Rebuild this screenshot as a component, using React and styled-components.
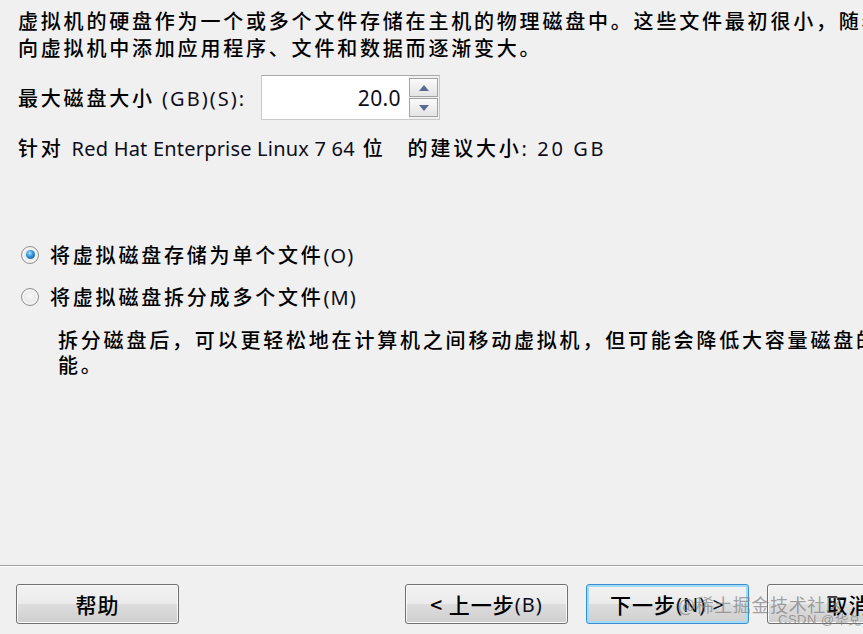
import React from 'react';
import styled, { createGlobalStyle } from 'styled-components';

const Global = createGlobalStyle`
  html, body { margin: 0; padding: 0; background: #f0f0f0; }
  body { width: 863px; height: 634px; overflow: hidden; }
`;

const Dialog = styled.div`
  position: relative;
  width: 863px;
  height: 634px;
  overflow: hidden;
  background: #f0f0f0;
  display: flex;
  flex-direction: column;
  font-family: "Noto Sans CJK SC", "Noto Sans", sans-serif;
  font-size: 20px;
  font-weight: 500;
  letter-spacing: 2.8px;
  color: #000;
`;

const Body = styled.div`
  flex: 1;
  display: flex;
  flex-direction: column;
  padding: 7px 0 0 18px;
`;

const Line = styled.div`
  white-space: nowrap;
  height: ${p => p.$h || 27}px;
  line-height: ${p => p.$h || 27}px;
`;

const Lat = styled.span`
  font-family: "Noto Sans", "DejaVu Sans", sans-serif;
  font-size: 20px;
  font-weight: 400;
  letter-spacing: ${p => p.$ls || 0.2}px;
  color: #0d0d1a;
`;

const Sp = styled.span`
  display: inline-block;
  width: ${p => p.$w}px;
`;

const SizeRow = styled.div`
  margin-top: 14px;
  display: flex;
  align-items: center;
  height: 45px;
`;

const Label = styled.div`
  width: 243px;
  white-space: nowrap;
`;

const Spin = styled.div`
  width: 179px;
  height: 45px;
  box-sizing: border-box;
  display: flex;
  border: 1px solid #c9c9c9;
  border-top-color: #a9a9a9;
  background: #fff;
`;

const Field = styled.div`
  flex: 1;
  display: flex;
  align-items: center;
  justify-content: flex-end;
  padding-right: 8px;
  font-family: "Noto Sans", "DejaVu Sans", sans-serif;
  font-size: 21px;
  font-weight: 400;
  letter-spacing: 0.4px;
  color: #0d0d1a;
`;

const Spinner = styled.div`
  width: 29px;
  display: flex;
  flex-direction: column;
  padding: 2px 1px 2px 0;
  gap: 1px;
  background: #f0f0f0;
`;

const SpinBtn = styled.div`
  flex: 1;
  border: 1px solid #a3a3a3;
  background: linear-gradient(#fbfbfb, #e4e4e4);
  display: flex;
  align-items: center;
  justify-content: center;
`;

const Arrow = ({ down }) => (
  <svg width="10" height="6" viewBox="0 0 10 6">
    <polygon points={down ? '0,0 10,0 5,6' : '0,6 10,6 5,0'} fill="#5a6b96" />
  </svg>
);

const Rec = styled(Line)`
  margin-top: 14px;
`;

const RadioGroup = styled.div`
  margin-top: 80px;
  display: flex;
  flex-direction: column;
  gap: 15px;
`;

const RadioRow = styled.div`
  display: flex;
  align-items: center;
  height: 27px;
  padding-left: 3px;
  gap: 11px;
  white-space: nowrap;
`;

const RadioDot = styled.span`
  width: 18px;
  height: 18px;
  box-sizing: border-box;
  border-radius: 50%;
  border: 1px solid #8f9090;
  background: radial-gradient(circle at 50% 45%, #f8f8f8 0%, #e6e6e6 60%, #d2d2d2 100%);
  display: flex;
  align-items: center;
  justify-content: center;
  box-shadow: inset 0 0 0 2px #f4f4f4;
  &::after {
    content: "";
    display: ${p => (p.$on ? 'block' : 'none')};
    width: 9px;
    height: 9px;
    border-radius: 50%;
    background: radial-gradient(circle at 40% 35%, #a6e4ff 0%, #2f8fd8 45%, #0b4a8c 100%);
  }
`;

const Desc = styled.div`
  margin-top: 17px;
  padding-left: 40px;
`;

const Separator = styled.div`
  height: 0;
  border-top: 1px solid #a0a0a0;
  border-bottom: 1px solid #ffffff;
`;

const Footer = styled.div`
  display: flex;
  padding: 17px 0 10px 16px;
`;

const Group = styled.div`
  display: flex;
  gap: 18px;
  margin-left: 226px;
`;

const Button = styled.div`
  flex: none;
  width: 163px;
  height: 40px;
  box-sizing: border-box;
  border: 1px solid ${p => (p.$focus ? '#3c8ccf' : '#707070')};
  border-radius: 3px;
  background: linear-gradient(#f2f2f2 0%, #ebebeb 50%, #dddddd 50%, #cfcfcf 100%);
  box-shadow: inset 0 0 0 ${p => (p.$focus ? '2px #9fdcf8' : '1px #fbfbfb')};
  display: flex;
  align-items: center;
  justify-content: center;
  white-space: nowrap;
  font-size: 21px;
  letter-spacing: 1px;
`;

const Watermark = styled.div`
  position: absolute;
  left: 678px;
  top: 591px;
  display: flex;
  flex-direction: column;
  align-items: flex-start;
  white-space: nowrap;
  color: rgba(125, 125, 125, 0.7);
  font-weight: 400;
  pointer-events: none;
`;

const WmMain = styled.div`
  font-size: 18px;
  letter-spacing: 0.6px;
  line-height: 26px;
`;

const WmSub = styled.div`
  font-family: "Liberation Sans", sans-serif;
  font-size: 13px;
  letter-spacing: 0.5px;
  line-height: 14px;
  margin-left: 100px;
  margin-top: -4px;
`;

export default function App() {
  return (
    <Dialog>
      <Global />
      <Body>
        <Line>虚拟机的硬盘作为一个或多个文件存储在主机的物理磁盘中。这些文件最初很小，随着您</Line>
        <Line>向虚拟机中添加应用程序、文件和数据而逐渐变大。</Line>
        <SizeRow>
          <Label>
            最大磁盘大小 <Lat $ls={2}>(GB)(S):</Lat>
          </Label>
          <Spin>
            <Field>20.0</Field>
            <Spinner>
              <SpinBtn><Arrow /></SpinBtn>
              <SpinBtn><Arrow down /></SpinBtn>
            </Spinner>
          </Spin>
        </SizeRow>
        <Rec>
          针对<Sp $w={8} /><Lat>Red Hat Enterprise Linux 7 64</Lat><Sp $w={8} />位<Sp $w={22} />的建议大小<Lat $ls={2.6}>: 20 GB</Lat>
        </Rec>
        <RadioGroup>
          <RadioRow>
            <RadioDot $on />
            <span>将虚拟磁盘存储为单个文件<Lat $ls={1}>(O)</Lat></span>
          </RadioRow>
          <RadioRow>
            <RadioDot />
            <span>将虚拟磁盘拆分成多个文件<Lat $ls={1}>(M)</Lat></span>
          </RadioRow>
        </RadioGroup>
        <Desc>
          <Line $h={25}>拆分磁盘后，可以更轻松地在计算机之间移动虚拟机，但可能会降低大容量磁盘的性</Line>
          <Line $h={25}>能。</Line>
        </Desc>
      </Body>
      <Separator />
      <Footer>
        <Button>帮助</Button>
        <Group>
          <Button>&lt; 上一步<Lat $ls={1}>(B)</Lat></Button>
          <Button $focus>下一步<Lat $ls={1}>(N) &gt;</Lat></Button>
          <Button>取消</Button>
        </Group>
      </Footer>
      <Watermark>
        <WmMain>@稀土掘金技术社区</WmMain>
        <WmSub>CSDN @华兑</WmSub>
      </Watermark>
    </Dialog>
  );
}
